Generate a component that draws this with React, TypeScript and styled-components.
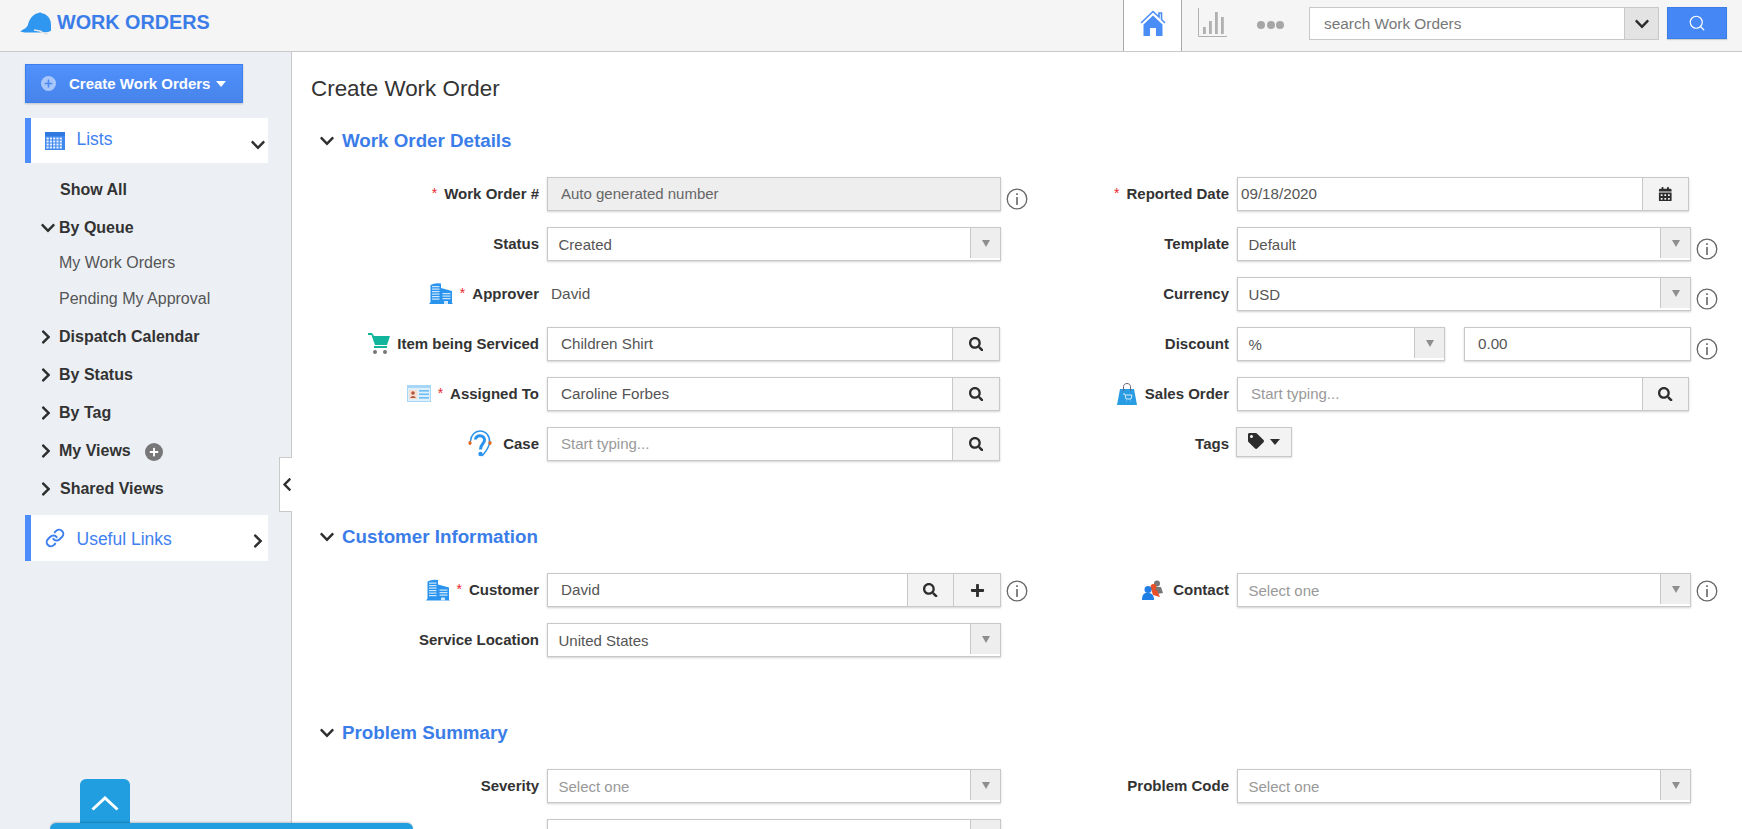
import React from "react";
import styled, { createGlobalStyle } from "styled-components";
import { FaCalendarAlt, FaChevronDown, FaChevronLeft, FaChevronRight, FaPlus, FaSearch, FaTag } from "react-icons/fa";
import { Link as LinkIcon, Search } from "lucide-react";

const Global = createGlobalStyle`
  html, body { margin: 0; padding: 0; height: 100%; overflow: hidden; background: #fff; }
  body { font-family: "Liberation Sans", Arial, sans-serif; color: #333; }
  * { box-sizing: border-box; }
`;

const Page = styled.div`
  display: flex;
  flex-direction: column;
  height: 829px;
  overflow: hidden;
`;

const Header = styled.header`
  flex: 0 0 52px;
  display: flex;
  align-items: flex-start;
  background: #f5f5f5;
  border-bottom: 1px solid #c9c9c9;
  padding-right: 15px;
`;

const Brand = styled.div`
  display: flex;
  align-items: flex-start;
  gap: 6px;
  padding: 12px 0 0 20px;
  margin-right: auto;
`;

const BrandText = styled.span`
  font-size: 19.8px;
  line-height: 20px;
  font-weight: 700;
  color: #3b7de8;
`;

const HomeTab = styled.div`
  width: 59px;
  height: 51px;
  background: #fff;
  border-left: 1px solid #a9a9a9;
  border-right: 1px solid #a9a9a9;
  display: flex;
  justify-content: center;
  padding-top: 10px;
`;

const ChartSlot = styled.div`
  margin: 8px 30px 0 16px;
  line-height: 0;
`;

const DotsSlot = styled.div`
  display: flex;
  gap: 1.5px;
  margin: 21px 25px 0 0;
`;

const Dot = styled.span`
  width: 8px;
  height: 8px;
  border-radius: 50%;
  background: #a6a6a6;
`;

const SearchBox = styled.div`
  width: 350px;
  height: 33px;
  margin-top: 7px;
  display: flex;
  background: #fff;
  border: 1px solid #c8c8c8;
`;

const SearchInput = styled.input`
  flex: 1;
  min-width: 0;
  border: 0;
  outline: 0;
  padding: 1px 0 0 14px;
  background: transparent;
  font: 15.4px "Liberation Sans", Arial, sans-serif;
  &::placeholder { color: #777; opacity: 1; }
`;

const SearchCaret = styled.div`
  width: 34px;
  background: #e3e3e3;
  border-left: 1px solid #c8c8c8;
  display: flex;
  align-items: center;
  justify-content: center;
  color: #2d2d2d;
  font-size: 16px;
`;

const SearchButton = styled.button`
  width: 60px;
  height: 32px;
  margin: 7px 0 0 8px;
  padding: 0;
  border: 1px solid #3a7de6;
  background: #4487f5;
  color: #fff;
  display: flex;
  align-items: center;
  justify-content: center;
  box-shadow: 0 1px 1px rgba(0, 0, 0, 0.15);
`;

const Body = styled.div`
  flex: 1;
  min-height: 0;
  display: flex;
`;

const Sidebar = styled.aside`
  position: relative;
  flex: 0 0 292px;
  background: #ecf0f5;
  border-right: 1px solid #c9c9c9;
  padding: 12px 23px 0 25px;
`;

const CreateButton = styled.button`
  width: 218px;
  height: 39px;
  display: flex;
  align-items: center;
  padding: 0 0 0 15px;
  border: 1px solid #3b7fee;
  background: linear-gradient(#5091fd, #4783ea);
  color: #fff;
  font: 700 15px "Liberation Sans", Arial, sans-serif;
  box-shadow: 0 1px 2px rgba(0, 0, 0, 0.2);
`;

const CreateIcon = styled.span`
  width: 15px;
  height: 15px;
  border-radius: 50%;
  background: #a9c6fa;
  color: #4b8af5;
  display: flex;
  align-items: center;
  justify-content: center;
  margin-right: 13px;
  font-size: 9px;
`;

const Caret = styled.span`
  width: 0;
  height: 0;
  margin-left: 6px;
  margin-top: 1px;
  border-left: 5.5px solid transparent;
  border-right: 5.5px solid transparent;
  border-top: 6px solid currentColor;
`;

const NavCard = styled.div<{ $top: number; $height: number }>`
  display: flex;
  align-items: center;
  height: ${(p) => p.$height}px;
  margin-top: ${(p) => p.$top}px;
  width: 243px;
  background: #fff;
  border-left: 6px solid #4d8dfb;
  padding: 0 2px 0 14px;
  color: #3f81f0;
  font-size: 17.5px;
`;

const CardLabel = styled.span<{ $shift: number }>`
  flex: 1;
  margin-left: 11.5px;
  position: relative;
  top: ${(p) => p.$shift}px;
`;

const CardChevron = styled.span<{ $drop: number }>`
  display: flex;
  color: #2f2f2f;
  font-size: 16px;
  margin-top: ${(p) => p.$drop}px;
`;

const NavList = styled.ul`
  list-style: none;
  margin: 8px 0 0;
  padding: 0 0 0 16px;
`;

const NavItem = styled.li<{ $indent?: boolean }>`
  display: flex;
  align-items: center;
  height: 38px;
  font-size: 16px;
  font-weight: 700;
  color: #333;
  position: relative;
  padding-left: ${(p) => (p.$indent ? 19 : 18)}px;
`;

const SubList = styled.ul`
  list-style: none;
  margin: -2px 0 1px;
  padding: 0;
`;

const NavSubItem = styled.li`
  display: flex;
  align-items: center;
  height: 36px;
  padding-left: 18px;
  font-size: 16px;
  color: #555;
`;

const NavArrow = styled.span<{ $left: number }>`
  position: absolute;
  left: ${(p) => p.$left}px;
  top: 11px;
  display: flex;
  font-size: 16px;
  color: #2f2f2f;
`;

const AddView = styled.span`
  width: 18px;
  height: 18px;
  border-radius: 50%;
  background: #777;
  color: #fff;
  margin: 2px 0 0 14px;
  font-size: 10px;
  display: flex;
  align-items: center;
  justify-content: center;
`;

const CollapseHandle = styled.div`
  position: absolute;
  top: 405px;
  right: -1px;
  width: 13px;
  height: 55px;
  background: #fff;
  border: 1px solid #c9c9c9;
  border-right: 0;
  display: flex;
  align-items: center;
  padding-left: 2px;
  font-size: 15px;
  color: #2f2f2f;
`;

const Main = styled.main`
  flex: 1;
  min-width: 0;
  overflow: hidden;
  padding-top: 22px;
`;

const Title = styled.h1`
  margin: 0 0 25px 19px;
  height: 30px;
  font-size: 22.4px;
  line-height: 30px;
  font-weight: 400;
  color: #333;
`;

const Section = styled.section`
  margin-bottom: 64px;
`;

const SectionHead = styled.h2`
  display: flex;
  align-items: center;
  height: 24px;
  margin: 0 0 24px 27px;
  font-size: 18.75px;
  font-weight: 700;
  color: #3b7de8;
`;

const HeadChevron = styled.span`
  display: flex;
  font-size: 16px;
  color: #2f2f2f;
  margin-right: 7px;
`;

const Columns = styled.div`
  display: grid;
  grid-template-columns: 740px 1fr;
`;

const Column = styled.div`
  display: flex;
  flex-direction: column;
  gap: 16px;
`;

const Row = styled.div`
  display: flex;
  min-height: 34px;
`;

const Label = styled.label<{ $w: number }>`
  flex: 0 0 ${(p) => p.$w}px;
  display: flex;
  align-items: center;
  justify-content: flex-end;
  font-size: 15px;
  font-weight: 700;
  color: #333;
  padding-bottom: 1px;
`;

const LabelIcon = styled.span<{ $gap: number }>`
  display: flex;
  margin-right: ${(p) => p.$gap}px;
`;

const Star = styled.span`
  color: #e8232a;
  font-weight: 400;
  font-size: 14px;
  margin-right: 7px;
  position: relative;
  top: -1px;
`;

const Control = styled.div<{ $w: number }>`
  flex: 0 0 ${(p) => p.$w}px;
  margin-left: 8px;
  display: flex;
  height: 34px;
`;

const Group = styled.div<{ $w?: number }>`
  flex: ${(p) => (p.$w ? `0 0 ${p.$w}px` : "1")};
  min-width: 0;
  display: flex;
  background: #fff;
  border: 1px solid #c8c8c8;
  box-shadow: 0 1px 2px rgba(0, 0, 0, 0.18);
`;

const Field = styled.input<{ $disabled?: boolean; $pad?: number }>`
  flex: 1;
  min-width: 0;
  border: 0;
  outline: 0;
  padding: 0 0 1px ${(p) => p.$pad ?? 13}px;
  background: ${(p) => (p.$disabled ? "#eeeeee" : "transparent")};
  color: #555;
  font: 15.2px "Liberation Sans", Arial, sans-serif;
  &::placeholder { color: ${(p) => (p.$disabled ? "#666" : "#999")}; opacity: 1; font-size: 15px; }
`;

const Addon = styled.div<{ $w: number }>`
  flex: 0 0 ${(p) => p.$w}px;
  background: #f3f3f3;
  border-left: 1px solid #c8c8c8;
  display: flex;
  align-items: center;
  justify-content: center;
  color: #2d2d2d;
  font-size: 14.5px;
`;

const SelectText = styled.span<{ $muted?: boolean }>`
  flex: 1;
  align-self: center;
  padding: 1px 0 0 10.5px;
  font-size: 15px;
  color: ${(p) => (p.$muted ? "#999" : "#555")};
`;

const SelectArrow = styled.div`
  flex: 0 0 30px;
  margin: 0 0 2px;
  background: #eeeeee;
  border-left: 1px solid #c8c8c8;
  display: flex;
  align-items: center;
  justify-content: center;
`;

const Triangle = styled.span`
  width: 0;
  height: 0;
  border-left: 4.5px solid transparent;
  border-right: 4.5px solid transparent;
  border-top: 7px solid #8e8e8e;
`;

const PlainValue = styled.span`
  margin-left: 4px;
  align-self: center;
  font-size: 15.4px;
  color: #555;
  padding-bottom: 1px;
`;

const TagButton = styled.button`
  width: 56px;
  height: 30px;
  margin-left: -1px;
  padding: 0 0 2px;
  background: #f3f3f3;
  border: 1px solid #c8c8c8;
  box-shadow: 0 1px 2px rgba(0, 0, 0, 0.15);
  display: flex;
  align-items: center;
  justify-content: center;
  color: #2d2d2d;
  font-size: 16px;
`;

const InfoWrap = styled.span<{ $drop: number }>`
  margin: ${(p) => p.$drop}px 0 0 5px;
  line-height: 0;
`;

const DiscountGap = styled.div`
  flex: 0 0 19px;
`;

const TabUp = styled.div`
  position: fixed;
  left: 80px;
  bottom: 6px;
  width: 50px;
  height: 44px;
  background: #219edf;
  border-radius: 6px 6px 0 0;
  display: flex;
  justify-content: center;
  padding-top: 17px;
`;

const BottomBar = styled.div`
  position: fixed;
  left: 50px;
  bottom: 0;
  width: 363px;
  height: 6px;
  background: #219edf;
  border-radius: 8px 8px 0 0;
  box-shadow: 0 -1px 2px rgba(0, 0, 0, 0.2);
`;

const HatIcon = () => (
  <svg width="31" height="24" viewBox="0 0 31 24">
    <path d="M0 19.5 C4 17 7 16 8 12.5 C10 5 15 1 19 1 L20 0 L21 1 C27 2 31 6 31 13 L31 18.5 C31 19 28 20.5 24 20.5 L10 20.5 C6 20.5 3 20.5 0 19.5 Z" fill="#2f97f0" />
    <path d="M14 18 L20 19 L23 21 L27 21" stroke="#e4e6e8" strokeWidth="1.6" fill="none" />
    <circle cx="26" cy="21.5" r="1.6" fill="#dfe2e5" />
  </svg>
);

const HomeIcon = () => (
  <svg width="26" height="26" viewBox="0 0 26 26">
    <path d="M1 13 L13 1.5 L19 7 L19 3 L21.5 3 L21.5 9.5 L25 13" fill="none" stroke="#4a8df6" strokeWidth="1.6" />
    <path d="M3.5 14.5 L13 5.5 L22.5 14.5 L22.5 26 L16 26 L16 18 L10 18 L10 26 L3.5 26 Z" fill="#4a8df6" />
  </svg>
);

const ChartIcon = () => (
  <svg width="29" height="29" viewBox="0 0 29 29">
    <path d="M0.5 0 V28.5 H29" fill="none" stroke="#b0b0b0" />
    <g fill="#b0b0b0">
      <rect x="5" y="19" width="2.8" height="7" />
      <rect x="11" y="13" width="2.8" height="13" />
      <rect x="17" y="4" width="2.8" height="22" />
      <rect x="23" y="9" width="2.8" height="17" />
    </g>
  </svg>
);

const ListsIcon = () => (
  <svg width="20" height="18" viewBox="0 0 20 18">
    <rect width="20" height="18" fill="#3f88ee" />
    <rect y="0" width="20" height="4" fill="#2f78e0" />
    <g fill="#e8f1fd">
      {[5.5, 8.5, 11.5, 14.5].map((y) =>
        [1.5, 4.8, 8.1, 11.4, 14.7].map((x) => <rect key={`${x}-${y}`} x={x} y={y} width="2.2" height="2" />)
      )}
    </g>
  </svg>
);

const InfoIcon = () => (
  <svg width="22" height="22" viewBox="0 0 22 22">
    <circle cx="11" cy="11" r="9.8" fill="none" stroke="#666" strokeWidth="1.3" />
    <rect x="10.2" y="9" width="1.6" height="8" fill="#666" />
    <rect x="10.2" y="5.2" width="1.6" height="1.8" fill="#666" />
  </svg>
);

const BuildingIcon = ({ w, h }: { w: number; h: number }) => (
  <svg width={w} height={h} viewBox="0 0 24 21">
    <path d="M1.5 2 Q6 -0.5 12 0.5 L12 5 L23 8 L23 20 L24 21 L0 21 L1.5 19 Z" fill="#2a93ee" />
    <g fill="#cfe8fb">
      {[3, 5.5, 8, 10.5, 13, 15.5].map((y) => (
        <rect key={y} x="3" y={y} width="7.5" height="1.2" />
      ))}
      {[10, 12.5, 15].map((y) => (
        <rect key={y} x="13.5" y={y} width="8" height="1.2" />
      ))}
      <rect x="15" y="18" width="4" height="3" />
    </g>
  </svg>
);

const CartIcon = () => (
  <svg width="22" height="21" viewBox="0 0 22 21">
    <path d="M0 0 H4 L6 3 H22 L19 12 H7 L3.5 2 H0 Z" fill="#10b59c" />
    <path d="M6 13 H19 V15 H6 Z" fill="#10b59c" />
    <circle cx="7" cy="19" r="2" fill="#777" />
    <circle cx="17" cy="19" r="2" fill="#777" />
  </svg>
);

const CardIcon = () => (
  <svg width="24" height="17" viewBox="0 0 24 17">
    <rect width="24" height="17" fill="#a8d6f7" />
    <rect x="1" y="3" width="22" height="13" fill="#dff0fc" />
    <rect x="2" y="5" width="8" height="9" fill="#f7ddd0" />
    <circle cx="6" cy="8" r="1.8" fill="#b0553c" />
    <path d="M3 13 Q6 9 9 13 Z" fill="#b0553c" />
    <g fill="#6dbcf3">
      <rect x="12" y="5" width="10" height="1.6" />
      <rect x="12" y="8.5" width="10" height="1.6" />
      <rect x="12" y="12" width="10" height="1.6" />
    </g>
  </svg>
);

const EarIcon = () => (
  <svg width="24" height="27" viewBox="0 0 24 27">
    <path d="M2.5 11 C3 5 7 1 12 1 C18 1 22 6 21.5 12 C21 19 17 22 14 26" fill="none" stroke="#2a93ee" strokeWidth="1.5" />
    <path d="M7.5 9.5 C7.5 4.5 16.5 4.5 16.5 10 C16.5 14 12.5 13.5 12.5 19.5" fill="none" stroke="#2a93ee" strokeWidth="3" />
    <circle cx="12.5" cy="24" r="2.2" fill="#2a93ee" />
    <rect x="0.5" y="11" width="3" height="4" rx="1.4" fill="#dc6a25" />
    <rect x="20.5" y="11" width="3" height="4" rx="1.4" fill="#dc6a25" />
  </svg>
);

const BagIcon = () => (
  <svg width="20" height="22" viewBox="0 0 20 22">
    <path d="M3 6 H17 L20 22 H0 Z" fill="#2a9ce4" />
    <path d="M6.5 8 V3.5 C6.5 -0.5 13.5 -0.5 13.5 3.5 V8" fill="none" stroke="#667" strokeWidth="1" />
    <path d="M6 11 H8 L9 16 H14 L15 12 H8.5 M9 18 h0.5 M13.5 18 h0.5" fill="none" stroke="#d6eefb" strokeWidth="1" />
  </svg>
);

const ContactIcon = () => (
  <svg width="22" height="20" viewBox="0 0 22 20">
    <circle cx="15" cy="3.5" r="3" fill="#777" />
    <path d="M11 7 L19 7 L21 13 L15 14 Z" fill="#777" />
    <circle cx="11.5" cy="7" r="3" fill="#e8502a" />
    <path d="M9 9 L15 10 L18 17 L11 15 Z" fill="#e8502a" />
    <circle cx="6" cy="9.5" r="3.5" fill="#1f7fe5" />
    <path d="M0 20 C0 13 3 13 6 13 C9 13 12 14 12 20 Z" fill="#1f7fe5" />
  </svg>
);

const UpChevron = () => (
  <svg width="28" height="15" viewBox="0 0 28 15">
    <path d="M1.5 13.5 L14 2 L26.5 13.5" fill="none" stroke="#fff" strokeWidth="3" />
  </svg>
);

type IconKind = "building" | "buildingSmall" | "cart" | "card" | "ear" | "bag" | "contact";

const iconFor = (k?: IconKind) => {
  switch (k) {
    case "building":
      return <BuildingIcon w={24} h={21} />;
    case "buildingSmall":
      return <BuildingIcon w={24} h={22} />;
    case "cart":
      return <CartIcon />;
    case "card":
      return <CardIcon />;
    case "ear":
      return <EarIcon />;
    case "bag":
      return <BagIcon />;
    case "contact":
      return <ContactIcon />;
    default:
      return null;
  }
};

const iconGap: Partial<Record<IconKind, number>> = { ear: 11, bag: 8, contact: 9 };

const LEFT_LABEL = 247;
const RIGHT_LABEL = 197;
const CONTROL = 454;
const RIGHT_CONTROL = 454;

const FormLabel = ({ w, text, star, icon }: { w: number; text: string; star?: boolean; icon?: IconKind }) => (
  <Label $w={w}>
    {icon && <LabelIcon $gap={iconGap[icon] ?? 7}>{iconFor(icon)}</LabelIcon>}
    {star && <Star>*</Star>}
    {text}
  </Label>
);

const SelectField = ({ value, muted }: { value: string; muted?: boolean }) => (
  <Group>
    <SelectText $muted={muted}>{value}</SelectText>
    <SelectArrow>
      <Triangle />
    </SelectArrow>
  </Group>
);

const SearchField = ({ value, placeholder }: { value?: string; placeholder?: string }) => (
  <Group>
    <Field readOnly value={value ?? ""} placeholder={placeholder} />
    <Addon $w={47}>
      <FaSearch />
    </Addon>
  </Group>
);

export default function App() {
  return (
    <Page>
      <Global />
      <Header>
        <Brand>
          <HatIcon />
          <BrandText>WORK ORDERS</BrandText>
        </Brand>
        <HomeTab>
          <HomeIcon />
        </HomeTab>
        <ChartSlot>
          <ChartIcon />
        </ChartSlot>
        <DotsSlot>
          <Dot />
          <Dot />
          <Dot />
        </DotsSlot>
        <SearchBox>
          <SearchInput readOnly placeholder="search Work Orders" />
          <SearchCaret>
            <FaChevronDown />
          </SearchCaret>
        </SearchBox>
        <SearchButton>
          <Search size={18} strokeWidth={1.6} />
        </SearchButton>
      </Header>
      <Body>
        <Sidebar>
          <CreateButton>
            <CreateIcon>
              <FaPlus />
            </CreateIcon>
            Create Work Orders
            <Caret />
          </CreateButton>
          <NavCard $top={15} $height={45}>
            <ListsIcon />
            <CardLabel $shift={-1}>Lists</CardLabel>
            <CardChevron $drop={9}>
              <FaChevronDown />
            </CardChevron>
          </NavCard>
          <NavList>
            <NavItem $indent>Show All</NavItem>
            <NavItem>
              <NavArrow $left={-1}>
                <FaChevronDown />
              </NavArrow>
              By Queue
            </NavItem>
            <SubList>
              <NavSubItem>My Work Orders</NavSubItem>
              <NavSubItem>Pending My Approval</NavSubItem>
            </SubList>
            {["Dispatch Calendar", "By Status", "By Tag"].map((t) => (
              <NavItem key={t}>
                <NavArrow $left={-3}>
                  <FaChevronRight />
                </NavArrow>
                {t}
              </NavItem>
            ))}
            <NavItem>
              <NavArrow $left={-3}>
                <FaChevronRight />
              </NavArrow>
              My Views
              <AddView>
                <FaPlus />
              </AddView>
            </NavItem>
            <NavItem $indent>
              <NavArrow $left={-3}>
                <FaChevronRight />
              </NavArrow>
              Shared Views
            </NavItem>
          </NavList>
          <NavCard $top={7} $height={46}>
            <LinkIcon color="#3f81f0" size={20} strokeWidth={2.4} />
            <CardLabel $shift={1}>Useful Links</CardLabel>
            <CardChevron $drop={5}>
              <FaChevronRight />
            </CardChevron>
          </NavCard>
          <CollapseHandle>
            <FaChevronLeft />
          </CollapseHandle>
        </Sidebar>
        <Main>
          <Title>Create Work Order</Title>

          <Section>
            <SectionHead>
              <HeadChevron>
                <FaChevronDown />
              </HeadChevron>
              Work Order Details
            </SectionHead>
            <Columns>
              <Column>
                <Row>
                  <FormLabel w={LEFT_LABEL} text="Work Order #" star />
                  <Control $w={CONTROL}>
                    <Group>
                      <Field readOnly $disabled placeholder="Auto generated number" />
                    </Group>
                  </Control>
                  <InfoWrap $drop={11}>
                    <InfoIcon />
                  </InfoWrap>
                </Row>
                <Row>
                  <FormLabel w={LEFT_LABEL} text="Status" />
                  <Control $w={CONTROL}>
                    <SelectField value="Created" />
                  </Control>
                </Row>
                <Row>
                  <FormLabel w={LEFT_LABEL} text="Approver" star icon="building" />
                  <Control $w={CONTROL}>
                    <PlainValue>David</PlainValue>
                  </Control>
                </Row>
                <Row>
                  <FormLabel w={LEFT_LABEL} text="Item being Serviced" icon="cart" />
                  <Control $w={CONTROL - 1}>
                    <SearchField value="Children Shirt" />
                  </Control>
                </Row>
                <Row>
                  <FormLabel w={LEFT_LABEL} text="Assigned To" star icon="card" />
                  <Control $w={CONTROL - 1}>
                    <SearchField value="Caroline Forbes" />
                  </Control>
                </Row>
                <Row>
                  <FormLabel w={LEFT_LABEL} text="Case" icon="ear" />
                  <Control $w={CONTROL - 1}>
                    <SearchField placeholder="Start typing..." />
                  </Control>
                </Row>
              </Column>
              <Column>
                <Row>
                  <FormLabel w={RIGHT_LABEL} text="Reported Date" star />
                  <Control $w={RIGHT_CONTROL - 2}>
                    <Group>
                      <Field readOnly value="09/18/2020" $pad={3} />
                      <Addon $w={46}>
                        <FaCalendarAlt />
                      </Addon>
                    </Group>
                  </Control>
                </Row>
                <Row>
                  <FormLabel w={RIGHT_LABEL} text="Template" />
                  <Control $w={RIGHT_CONTROL}>
                    <SelectField value="Default" />
                  </Control>
                  <InfoWrap $drop={11}>
                    <InfoIcon />
                  </InfoWrap>
                </Row>
                <Row>
                  <FormLabel w={RIGHT_LABEL} text="Currency" />
                  <Control $w={RIGHT_CONTROL}>
                    <SelectField value="USD" />
                  </Control>
                  <InfoWrap $drop={11}>
                    <InfoIcon />
                  </InfoWrap>
                </Row>
                <Row>
                  <FormLabel w={RIGHT_LABEL} text="Discount" />
                  <Control $w={RIGHT_CONTROL}>
                    <Group $w={208}>
                      <SelectText>%</SelectText>
                      <SelectArrow>
                        <Triangle />
                      </SelectArrow>
                    </Group>
                    <DiscountGap />
                    <Group>
                      <Field readOnly value="0.00" />
                    </Group>
                  </Control>
                  <InfoWrap $drop={11}>
                    <InfoIcon />
                  </InfoWrap>
                </Row>
                <Row>
                  <FormLabel w={RIGHT_LABEL} text="Sales Order" icon="bag" />
                  <Control $w={RIGHT_CONTROL - 2}>
                    <Group>
                      <Field readOnly placeholder="Start typing..." />
                      <Addon $w={46}>
                        <FaSearch />
                      </Addon>
                    </Group>
                  </Control>
                </Row>
                <Row>
                  <FormLabel w={RIGHT_LABEL} text="Tags" />
                  <Control $w={RIGHT_CONTROL}>
                    <TagButton>
                      <FaTag />
                      <Caret />
                    </TagButton>
                  </Control>
                </Row>
              </Column>
            </Columns>
          </Section>

          <Section>
            <SectionHead>
              <HeadChevron>
                <FaChevronDown />
              </HeadChevron>
              Customer Information
            </SectionHead>
            <Columns>
              <Column>
                <Row>
                  <FormLabel w={LEFT_LABEL} text="Customer" star icon="buildingSmall" />
                  <Control $w={CONTROL}>
                    <Group>
                      <Field readOnly value="David" />
                      <Addon $w={46}>
                        <FaSearch />
                      </Addon>
                      <Addon $w={47}>
                        <FaPlus size={15} />
                      </Addon>
                    </Group>
                  </Control>
                  <InfoWrap $drop={7}>
                    <InfoIcon />
                  </InfoWrap>
                </Row>
                <Row>
                  <FormLabel w={LEFT_LABEL} text="Service Location" />
                  <Control $w={CONTROL}>
                    <SelectField value="United States" />
                  </Control>
                </Row>
              </Column>
              <Column>
                <Row>
                  <FormLabel w={RIGHT_LABEL} text="Contact" icon="contact" />
                  <Control $w={RIGHT_CONTROL}>
                    <SelectField value="Select one" muted />
                  </Control>
                  <InfoWrap $drop={7}>
                    <InfoIcon />
                  </InfoWrap>
                </Row>
              </Column>
            </Columns>
          </Section>

          <Section>
            <SectionHead>
              <HeadChevron>
                <FaChevronDown />
              </HeadChevron>
              Problem Summary
            </SectionHead>
            <Columns>
              <Column>
                <Row>
                  <FormLabel w={LEFT_LABEL} text="Severity" />
                  <Control $w={CONTROL}>
                    <SelectField value="Select one" muted />
                  </Control>
                </Row>
                <Row>
                  <FormLabel w={LEFT_LABEL} text="" />
                  <Control $w={CONTROL}>
                    <SelectField value="" />
                  </Control>
                </Row>
              </Column>
              <Column>
                <Row>
                  <FormLabel w={RIGHT_LABEL} text="Problem Code" />
                  <Control $w={RIGHT_CONTROL}>
                    <SelectField value="Select one" muted />
                  </Control>
                </Row>
              </Column>
            </Columns>
          </Section>
        </Main>
      </Body>
      <TabUp>
        <UpChevron />
      </TabUp>
      <BottomBar />
    </Page>
  );
}
